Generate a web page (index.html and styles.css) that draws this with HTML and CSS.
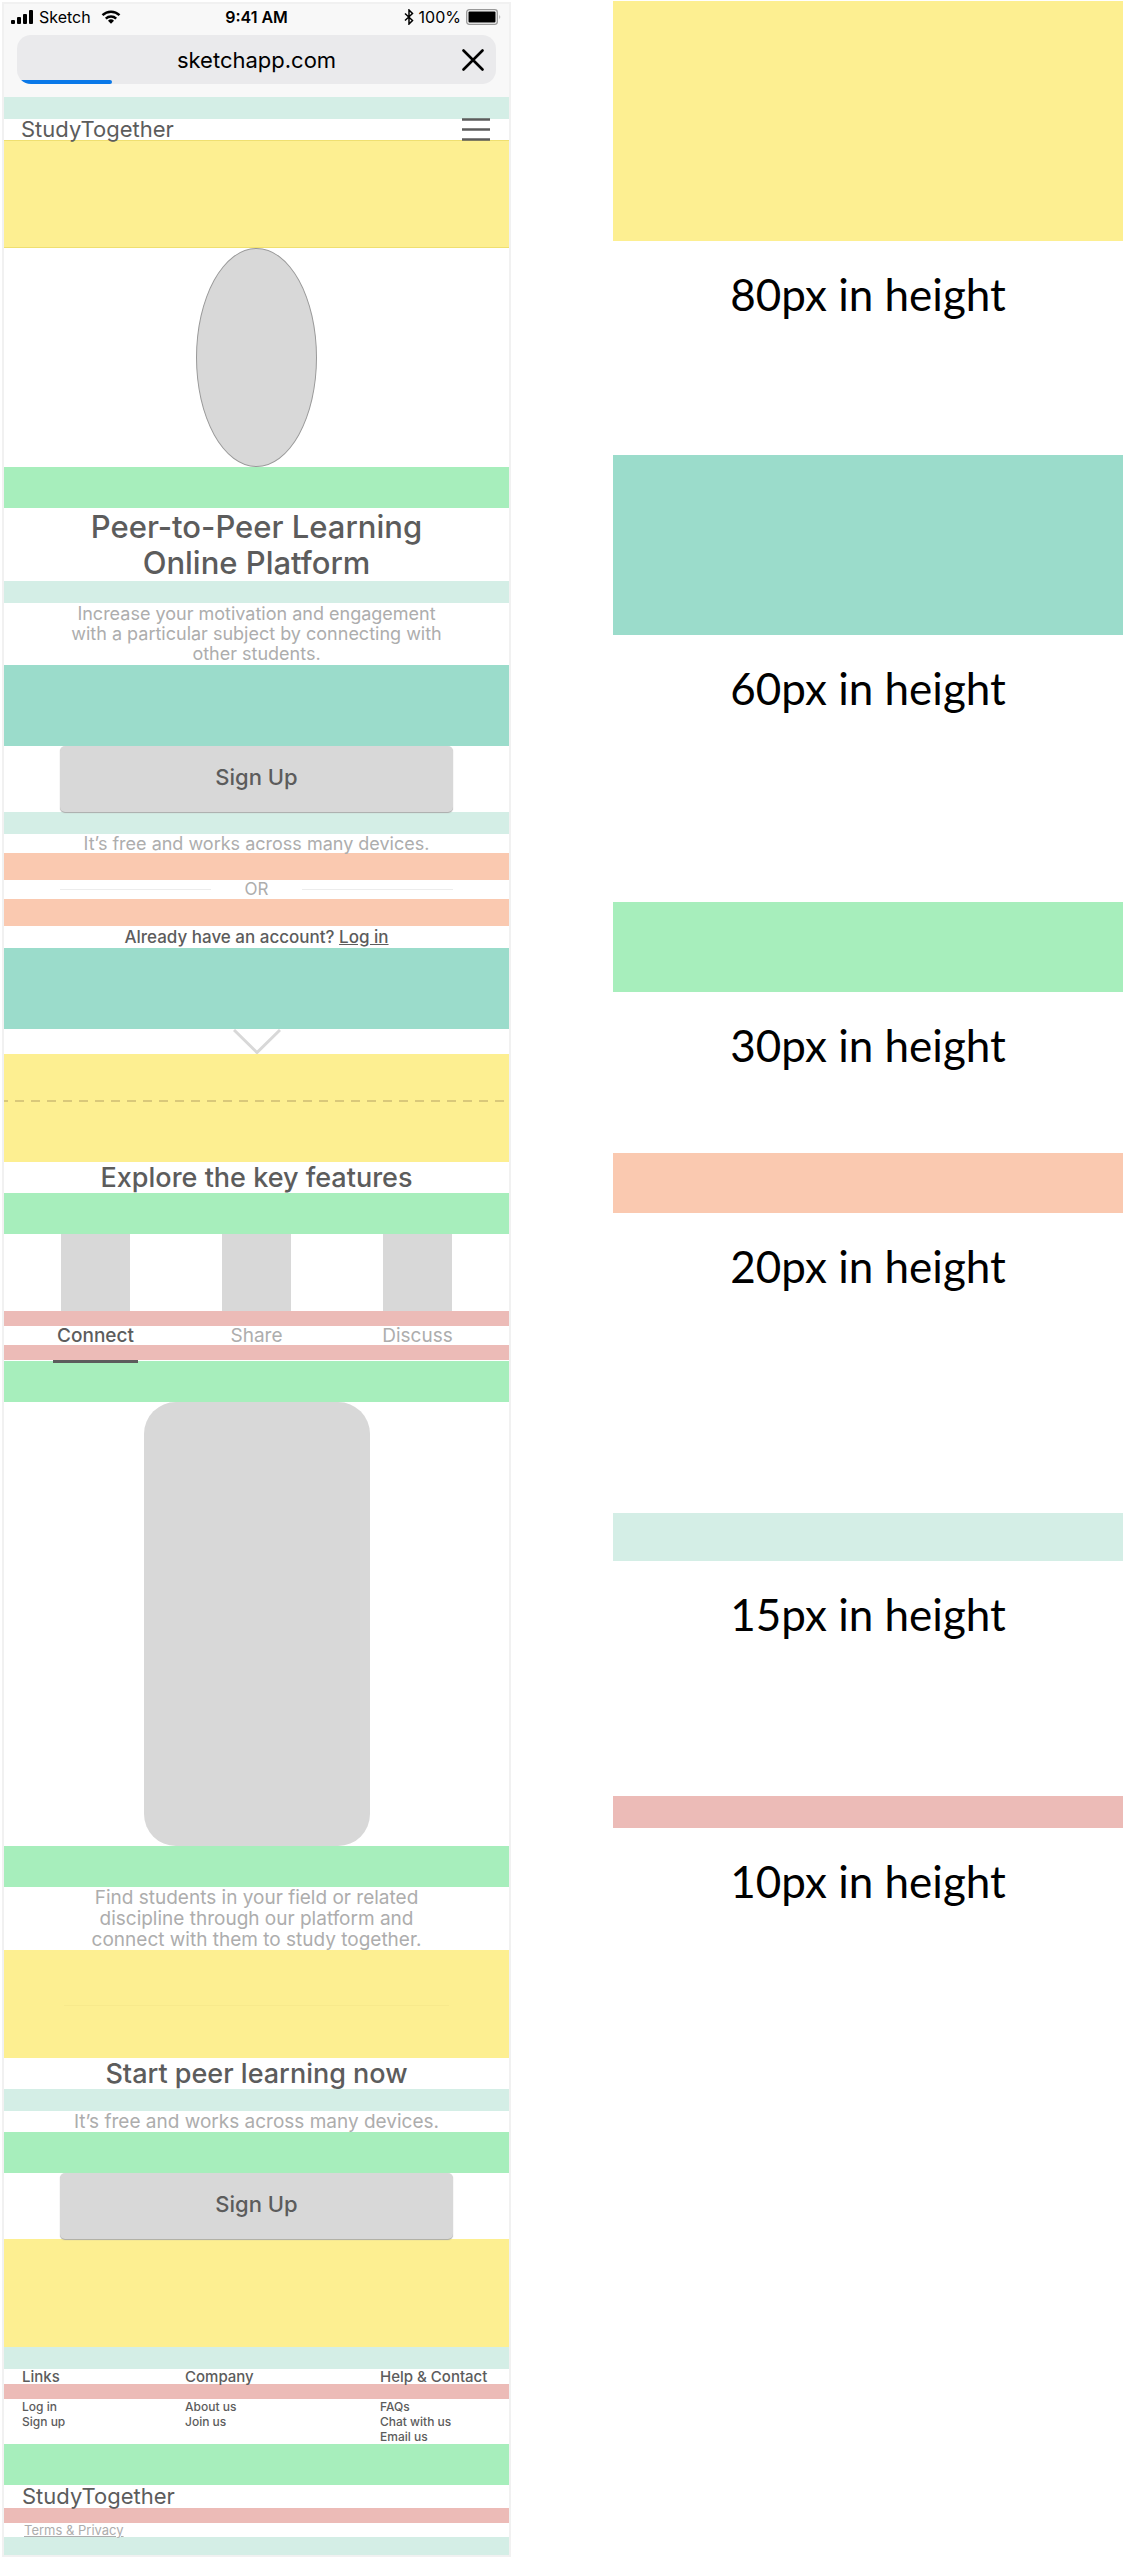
FILE: index.html
```html
<!DOCTYPE html>
<html lang="en">
<head>
<meta charset="utf-8">
<meta name="viewport" content="width=device-width, initial-scale=1">
<title>StudyTogether spacing guide</title>
<link rel="stylesheet" href="styles.css">
</head>
<body>
<main class="board">
  <section class="phone" aria-label="Mobile layout">
    <div class="chrome">
      <div class="status">
        <div class="status-side">
          <svg class="signal" viewBox="0 0 23 14" aria-hidden="true"><rect x="0" y="10" width="4" height="4" rx="1"/><rect x="6" y="7" width="4" height="7" rx="1"/><rect x="12" y="4" width="4" height="10" rx="1"/><rect x="18" y="0" width="4" height="14" rx="1"/></svg>
          <span>Sketch</span>
          <svg class="wifi" viewBox="0 0 20 14" aria-hidden="true"><path d="M1.5 5.2a12.2 12.2 0 0 1 17 0M4.8 8.6a7.500 7.500 0 0 1 10.400 0" fill="none" stroke="#000" stroke-width="2.400"/><path d="M10 13.800l-3-3a4.300 4.300 0 0 1 6 0z"/></svg>
        </div>
        <span class="status-time">9:41 AM</span>
        <div class="status-side status-right">
          <svg class="bluetooth" viewBox="0 0 10 16" aria-hidden="true"><path d="M1 4.500l7.500 7L5 15V1l3.500 3.500L1 11.500" fill="none" stroke="#000" stroke-width="1.500"/></svg>
          <span>100%</span>
          <svg class="battery" viewBox="0 0 36 16" aria-hidden="true"><rect x=".7" y=".7" width="30.600" height="14.600" rx="2.500" fill="none" stroke="#999" stroke-width="1.300"/><rect x="2.500" y="2.500" width="27" height="11" rx="1"/><path d="M33.500 5.500v5q1.500-2.500 0-5" fill="#888"/></svg>
        </div>
      </div>
      <div class="address">
        <input class="address-input" type="text" value="sketchapp.com" aria-label="Address">
        <button class="address-stop" type="button" aria-label="Stop loading"><svg viewBox="0 0 22 22" aria-hidden="true"><path d="M1.500 1.500l19 19M20.500 1.500l-19 19" stroke="#000" stroke-width="2.600" stroke-linecap="round"/></svg></button>
        <span class="address-progress"></span>
      </div>
    </div>

    <div class="band s15"></div>
    <header class="topbar">
      <span class="brand">StudyTogether</span>
      <button class="menu" type="button" aria-label="Menu"><svg viewBox="0 0 28 23" aria-hidden="true"><path d="M0 1.500h28M0 11.500h28M0 21.500h28" stroke="#5c5c5c" stroke-width="2.500"/></svg></button>
    </header>
    <div class="band s80 edged"></div>
    <div class="hero-shape"></div>
    <div class="band s30"></div>
    <h1 class="title">Peer-to-Peer Learning<br>Online Platform</h1>
    <div class="band s15"></div>
    <p class="intro">Increase your motivation and engagement<br>with a particular subject by connecting with<br>other students.</p>
    <div class="band s60"></div>
    <div class="action"><button class="signup" type="button">Sign Up</button></div>
    <div class="band s15"></div>
    <p class="note">It’s free and works across many devices.</p>
    <div class="band s20"></div>
    <div class="or"><span>OR</span></div>
    <div class="band s20"></div>
    <p class="login">Already have an account? <a href="#login">Log in</a></p>
    <div class="band s60"></div>
    <svg class="chevron" viewBox="0 0 48 25" aria-hidden="true"><path d="M1 1l23 22.500L47 1" fill="none" stroke="#d8d8d8" stroke-width="3"/></svg>
    <div class="band s80 fold"><svg class="fold-line" aria-hidden="true"><line x1="-5" y1="1" x2="100%" y2="1"/></svg></div>
    <h2 class="heading">Explore the key features</h2>
    <div class="band s30"></div>
    <div class="trio"><span class="feature-icon"></span><span class="feature-icon"></span><span class="feature-icon"></span></div>
    <div class="band s10"></div>
    <div class="trio tabs">
      <button class="tab current" type="button">Connect</button>
      <button class="tab" type="button">Share</button>
      <button class="tab" type="button">Discuss</button>
    </div>
    <div class="band s10"></div>
    <div class="trio marker-row"><span class="marker"></span></div>
    <div class="band s30"></div>
    <div class="device"></div>
    <div class="band s30"></div>
    <p class="detail">Find students in your field or related<br>discipline through our platform and<br>connect with them to study together.</p>
    <div class="band s80 divided"></div>
    <h2 class="heading">Start peer learning now</h2>
    <div class="band s15"></div>
    <p class="detail">It’s free and works across many devices.</p>
    <div class="band s30"></div>
    <div class="action"><button class="signup" type="button">Sign Up</button></div>
    <div class="band s80"></div>
    <footer>
      <div class="band s15"></div>
      <div class="columns column-heads"><h3>Links</h3><h3>Company</h3><h3>Help &amp; Contact</h3></div>
      <div class="band s10"></div>
      <nav class="columns column-links" aria-label="Footer">
        <ul><li><a href="#login">Log in</a></li><li><a href="#signup">Sign up</a></li></ul>
        <ul><li><a href="#about">About us</a></li><li><a href="#join">Join us</a></li></ul>
        <ul><li><a href="#faqs">FAQs</a></li><li><a href="#chat">Chat with us</a></li><li><a href="#email">Email us</a></li></ul>
      </nav>
      <div class="band s30"></div>
      <div class="footer-brand"><span class="brand">StudyTogether</span></div>
      <div class="band s10"></div>
      <div class="terms"><a href="#terms">Terms &amp; Privacy</a></div>
      <div class="band s15 last"></div>
    </footer>
  </section>

  <section class="legend" aria-label="Spacing key">
    <figure class="key key80"><div class="swatch"></div><figcaption>80px in height</figcaption></figure>
    <figure class="key key60"><div class="swatch"></div><figcaption>60px in height</figcaption></figure>
    <figure class="key key30"><div class="swatch"></div><figcaption>30px in height</figcaption></figure>
    <figure class="key key20"><div class="swatch"></div><figcaption>20px in height</figcaption></figure>
    <figure class="key key15"><div class="swatch"></div><figcaption>15px in height</figcaption></figure>
    <figure class="key key10"><div class="swatch"></div><figcaption>10px in height</figcaption></figure>
  </section>
</main>
</body>
</html>
```
FILE: styles.css
```css
:root {
  --yellow: #fdef91;
  --teal: #9bdccb;
  --green: #a7eebc;
  --orange: #fac9b0;
  --mint: #d4eee6;
  --pink: #ecbbb7;
  --grey: #d8d8d8;
  --dark: #5c5c5c;
  --soft: #adadad;
}

* { box-sizing: border-box; margin: 0; padding: 0; }

body {
  background: #fff;
  color: var(--dark);
  font-family: Inter, "Liberation Sans", sans-serif;
  font-size: 16px;
}

button { border: 0; background: none; color: inherit; font: inherit; }
svg { display: block; }
ul { list-style: none; }
a { color: inherit; }

.board {
  display: grid;
  grid-template-columns: 509fr 510fr;
  align-items: start;
  gap: 102px;
  padding: 1px 2px 3px;
}

/* Phone layout */
.phone { margin-top: 1px; border: 2px solid #f1f1f1; }

.chrome { padding: 0 13px 13px; background: #f8f8f8; color: #000; }
.status {
  display: grid;
  grid-template-columns: 1fr auto 1fr;
  align-items: center;
  height: 31px;
  margin: 0 -6px;
  padding-bottom: 5px;
}
.status-side { display: flex; align-items: center; gap: 5px; }
.status-side .wifi { margin-left: 5px; }
.status-right { justify-content: flex-end; }
.status-time { font-weight: 600; }
.signal { width: 23px; height: 14px; }
.wifi { width: 20px; height: 14px; }
.bluetooth { width: 10px; height: 16px; }
.battery { width: 36px; height: 16px; }

.address {
  position: relative;
  display: flex;
  height: 49px;
  border-radius: 14px;
  background: #eaeaec;
  overflow: hidden;
}
.address-input {
  flex: 1;
  min-width: 0;
  padding-left: 34px;
  border: 0;
  background: none;
  color: #000;
  font: 22px Inter, "Liberation Sans", sans-serif;
  text-align: center;
}
.address-stop { width: 34px; padding-right: 12px; }
.address-stop svg { width: 22px; height: 22px; }
.address-progress {
  position: absolute;
  bottom: 0;
  left: 0;
  width: 95px;
  height: 4px;
  border-radius: 0 2px 2px 0;
  background: #0a78e8;
}

.band { height: 22px; }
.s80 { height: 108px; background: var(--yellow); }
.s60 { height: 81px; background: var(--teal); }
.s30 { height: 41px; background: var(--green); }
.s20 { height: 27px; background: var(--orange); }
.s15 { background: var(--mint); }
.s10 { height: 15px; background: var(--pink); }
.last { height: 18px; }
.edged { border: solid #efdf70; border-width: 1px 0; }

.topbar {
  display: flex;
  justify-content: space-between;
  align-items: center;
  height: 21px;
  padding: 0 19px 0 17px;
}
.brand { font-size: 22px; line-height: 21px; }
.menu svg { width: 28px; height: 23px; }

.hero-shape {
  width: 121px;
  height: 219px;
  margin: 0 auto;
  border: 1px solid #999;
  border-radius: 50%;
  background: var(--grey);
}

.title, .heading, .intro, .note, .login, .detail { text-align: center; white-space: nowrap; }
.title { padding-top: 1px; font-size: 31px; font-weight: 500; line-height: 36px; }
.heading { font-size: 27px; font-weight: 500; line-height: 31px; }
.intro { padding: 1px 0; font-size: 18px; line-height: 20px; }
.note { font-size: 18px; line-height: 19px; }
.detail { font-size: 19px; line-height: 21px; }
.intro, .note, .detail { color: var(--soft); }
.login { font-size: 17px; font-weight: 500; line-height: 22px; }

.action { display: flex; height: 66px; padding: 0 56px; }
.signup {
  flex: 1;
  padding-bottom: 4px;
  border-radius: 5px;
  background: var(--grey);
  box-shadow: 0 1px 1px #aaa;
  font-size: 22px;
  font-weight: 500;
}

.or {
  display: flex;
  align-items: center;
  justify-content: center;
  gap: 34px;
  padding: 0 56px;
  color: var(--soft);
  font-size: 17px;
  line-height: 19px;
}
.or::before, .or::after { content: ""; flex: 1; height: 1px; background: #ececec; }

.chevron { width: 48px; height: 25px; margin: 0 auto; }

.fold { padding-top: 46px; }
.fold-line { width: 100%; height: 2px; }
.fold-line line { stroke: #d9c87a; stroke-width: 2; stroke-dasharray: 9 7; }

.trio { display: grid; grid-template-columns: repeat(3, 1fr); justify-items: center; padding: 0 11px; }
.feature-icon { width: 69px; height: 77px; background: var(--grey); }
.tab { color: var(--soft); font-size: 19px; line-height: 19px; }
.current { color: var(--dark); font-weight: 500; }
.marker-row { height: 1px; align-items: center; }
.marker { position: relative; width: 85px; height: 3px; background: var(--dark); }

.device {
  width: 226px;
  height: 444px;
  margin: 0 auto;
  border-radius: 32px;
  background: var(--grey);
}

.divided { padding: 55px 60px 0; }
.divided::before { content: ""; display: block; height: 1px; background: #f8e98c; }

.columns { display: grid; grid-template-columns: 163fr 195fr 111fr; padding: 0 18px; white-space: nowrap; }
.columns > * { min-width: 0; }
.column-heads h3 { font-size: 15px; font-weight: 500; line-height: 15px; }
.column-links { font-size: 12px; font-weight: 500; line-height: 15px; }
.column-links a { text-decoration: none; }
.footer-brand { display: flex; padding: 1px 18px; }
.terms { padding: 0 20px; color: var(--soft); font-size: 13px; line-height: 14px; }

/* Spacing key */
.legend { color: #000; font-family: Lato, "Open Sans", sans-serif; }
.key figcaption { padding: 28px 0 2px; font-size: 44px; line-height: 50px; text-align: center; }
.key80 .swatch { height: 240px; background: var(--yellow); }
.key60 .swatch { height: 180px; background: var(--teal); }
.key30 .swatch { height: 90px; background: var(--green); }
.key20 .swatch { height: 60px; background: var(--orange); }
.key15 .swatch { height: 48px; background: var(--mint); }
.key10 .swatch { height: 32px; background: var(--pink); }
.key80 { margin-bottom: 134px; }
.key60 { margin-bottom: 187px; }
.key30 { margin-bottom: 81px; }
.key20 { margin-bottom: 220px; }
.key15 { margin-bottom: 155px; }
```
